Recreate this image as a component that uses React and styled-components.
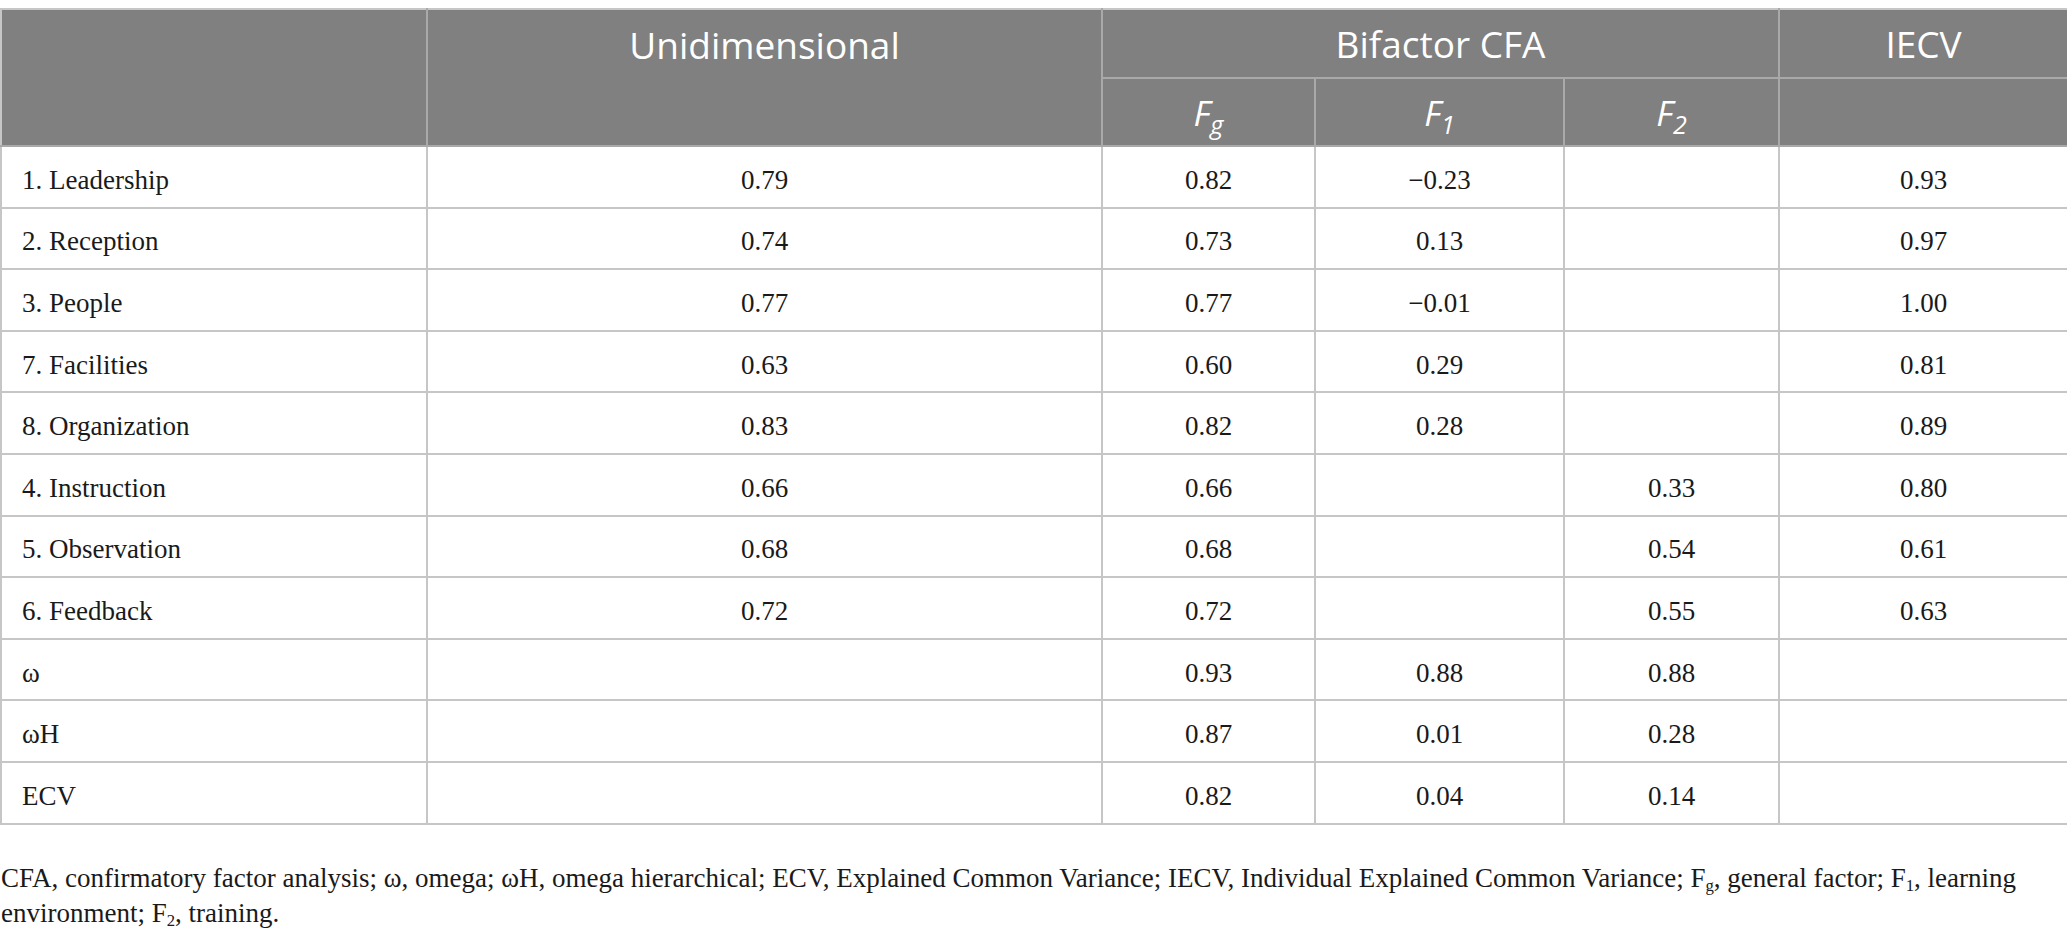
import React from "react";
import styled, { createGlobalStyle } from "styled-components";

const Global = createGlobalStyle`
  html, body { margin: 0; padding: 0; background: #ffffff; }
  body { font-family: "Liberation Serif", "Times New Roman", serif; color: #1a1a1a; }
`;

const Page = styled.div`
  padding-top: 8px;
  width: 2067px;
`;

const Table = styled.table`
  width: 2067px;
  table-layout: fixed;
  border-collapse: collapse;
  border-top: 2px solid #c6c6c6;
  border-bottom: 2px solid #c6c6c6;
`;

const Head = styled.thead`
  background: #7f807f;
`;

const HeadRow = styled.tr`
  height: ${(p) => p.$h}px;
`;

const HeadCell = styled.th`
  font-family: "Open Sans", "Noto Sans", sans-serif;
  font-weight: 400;
  font-size: 37px;
  line-height: 48px;
  color: #ffffff;
  text-align: center;
  padding: ${(p) => (p.$top ? "11px 10px 0" : "0 10px")};
  vertical-align: ${(p) => (p.$top ? "top" : "middle")};
  border: 2px solid #a9a9a9;
  border-top: none;
  &:first-child { border-left: 2px solid #c6c6c6; }
  &:last-child { border-right: 2px solid #c6c6c6; }
`;

const Factor = styled.span`
  font-style: italic;
  font-weight: 400;
  font-size: 35px;
  sub {
    font-size: 0.72em;
    vertical-align: -0.32em;
    line-height: 0;
  }
`;

const Row = styled.tr`
  height: 61.6px;
`;

const Cell = styled.td`
  font-size: 27px;
  line-height: 34px;
  color: #1a1a1a;
  text-align: ${(p) => (p.$label ? "left" : "center")};
  padding: ${(p) => (p.$label ? "6px 20px 0" : "6px 8px 0")};
  vertical-align: middle;
  border: 2px solid #c6c6c6;
  white-space: nowrap;
`;

const Note = styled.p`
  margin: 36px 0 0;
  padding: 0 0 0 1px;
  font-size: 27px;
  line-height: 35px;
  color: #1a1a1a;
  width: 2060px;
  sub {
    font-size: 0.62em;
    vertical-align: -0.25em;
    line-height: 0;
  }
`;

const rows = [
  ["1. Leadership", "0.79", "0.82", "\u22120.23", "", "0.93"],
  ["2. Reception", "0.74", "0.73", "0.13", "", "0.97"],
  ["3. People", "0.77", "0.77", "\u22120.01", "", "1.00"],
  ["7. Facilities", "0.63", "0.60", "0.29", "", "0.81"],
  ["8. Organization", "0.83", "0.82", "0.28", "", "0.89"],
  ["4. Instruction", "0.66", "0.66", "", "0.33", "0.80"],
  ["5. Observation", "0.68", "0.68", "", "0.54", "0.61"],
  ["6. Feedback", "0.72", "0.72", "", "0.55", "0.63"],
  ["\u03c9", "", "0.93", "0.88", "0.88", ""],
  ["\u03c9H", "", "0.87", "0.01", "0.28", ""],
  ["ECV", "", "0.82", "0.04", "0.14", ""],
];

const widths = [426, 675, 213, 249, 215, 289];

export default function App() {
  return (
    <Page>
      <Global />
      <Table>
        <colgroup>
          {widths.map((w, i) => (
            <col key={i} style={{ width: w }} />
          ))}
        </colgroup>
        <Head>
          <HeadRow $h={69}>
            <HeadCell rowSpan={2} $top />
            <HeadCell rowSpan={2} $top>Unidimensional</HeadCell>
            <HeadCell colSpan={3}>Bifactor CFA</HeadCell>
            <HeadCell>IECV</HeadCell>
          </HeadRow>
          <HeadRow $h={68}>
            <HeadCell>
              <Factor>F<sub>g</sub></Factor>
            </HeadCell>
            <HeadCell>
              <Factor>F<sub>1</sub></Factor>
            </HeadCell>
            <HeadCell>
              <Factor>F<sub>2</sub></Factor>
            </HeadCell>
            <HeadCell />
          </HeadRow>
        </Head>
        <tbody>
          {rows.map((r, i) => (
            <Row key={i}>
              {r.map((c, j) => (
                <Cell key={j} $label={j === 0}>
                  {c}
                </Cell>
              ))}
            </Row>
          ))}
        </tbody>
      </Table>
      <Note>
        CFA, confirmatory factor analysis; ω, omega; ωH, omega hierarchical; ECV, Explained Common Variance; IECV,
        Individual Explained Common Variance; F<sub>g</sub>, general factor; F<sub>1</sub>, learning environment;
        F<sub>2</sub>, training.
      </Note>
    </Page>
  );
}
